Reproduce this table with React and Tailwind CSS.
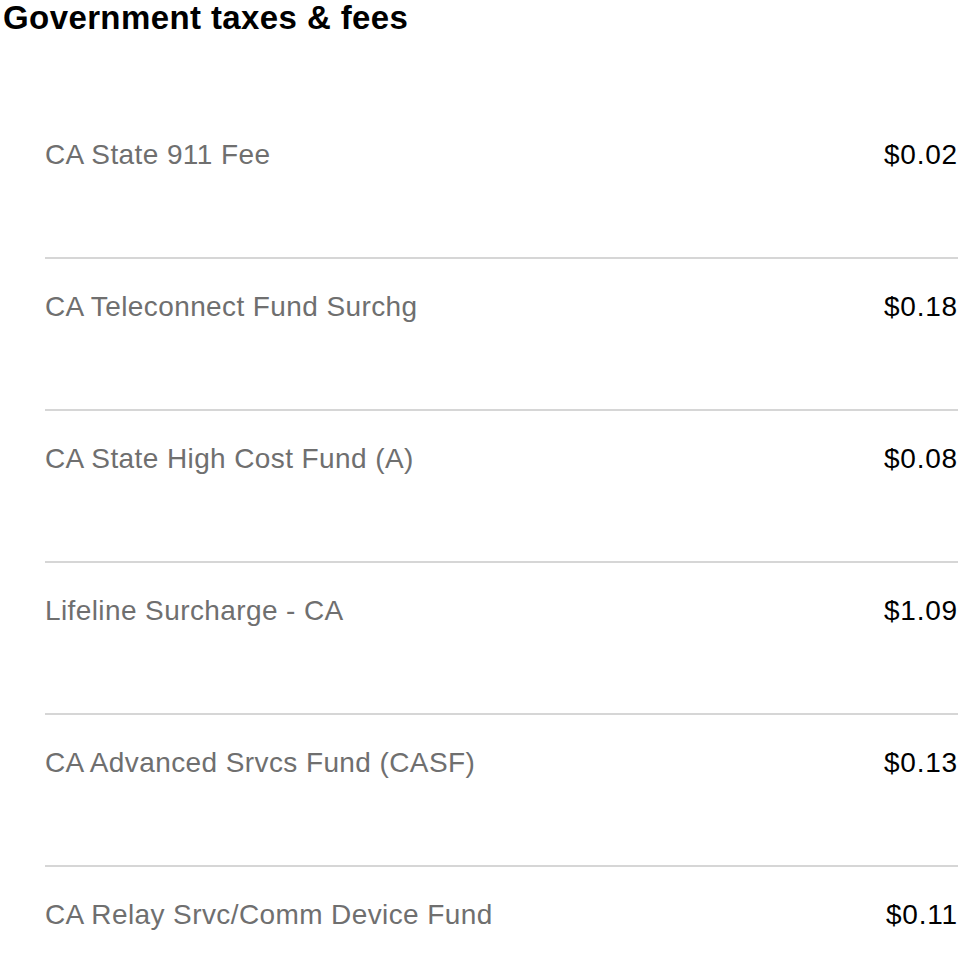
const fees = [
  { label: "CA State 911 Fee", amount: "$0.02" },
  { label: "CA Teleconnect Fund Surchg", amount: "$0.18" },
  { label: "CA State High Cost Fund (A)", amount: "$0.08" },
  { label: "Lifeline Surcharge - CA", amount: "$1.09" },
  { label: "CA Advanced Srvcs Fund (CASF)", amount: "$0.13" },
  { label: "CA Relay Srvc/Comm Device Fund", amount: "$0.11" },
];

export default function App() {
  return (
    <div className="h-screen bg-white font-['Liberation_Sans',Arial,sans-serif] overflow-hidden">
      {/* HEADER */}
      <h1 className="pl-[3px] pt-[1px] text-[33px] leading-[34px] font-bold text-black tracking-[0.4px]">
        Government taxes &amp; fees
      </h1>

      {/* LIST */}
      <ul className="pl-[45px] pr-[20px] mt-[72px]">
        {fees.map((fee, i) => (
          <li
            key={fee.label}
            className={
              "flex items-center justify-between pt-[34px] pb-[88px] " +
              (i < fees.length - 1 ? "border-b-2 border-[#d6d6d6]" : "")
            }
          >
            <span className="text-[28px] leading-[28px] tracking-[0.4px] text-[#6f6f6f]">{fee.label}</span>
            <span className="text-[28px] leading-[28px] tracking-[0.8px] text-black">{fee.amount}</span>
          </li>
        ))}
      </ul>
    </div>
  );
}
